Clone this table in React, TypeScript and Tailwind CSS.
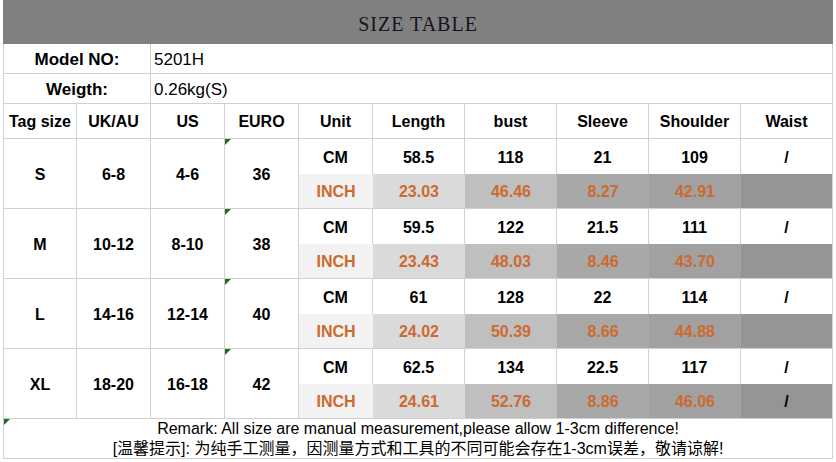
import type { ReactNode } from 'react';

type SizeRow = {
  tag: string;
  uk: string;
  us: string;
  eu: string;
  cm: string[];
  inch: string[];
};

const sizes: SizeRow[] = [
  { tag: 'S', uk: '6-8', us: '4-6', eu: '36', cm: ['58.5', '118', '21', '109', '/'], inch: ['23.03', '46.46', '8.27', '42.91', ''] },
  { tag: 'M', uk: '10-12', us: '8-10', eu: '38', cm: ['59.5', '122', '21.5', '111', '/'], inch: ['23.43', '48.03', '8.46', '43.70', ''] },
  { tag: 'L', uk: '14-16', us: '12-14', eu: '40', cm: ['61', '128', '22', '114', '/'], inch: ['24.02', '50.39', '8.66', '44.88', ''] },
  { tag: 'XL', uk: '18-20', us: '16-18', eu: '42', cm: ['62.5', '134', '22.5', '117', '/'], inch: ['24.61', '52.76', '8.86', '46.06', '/'] },
];

const headers = ['Tag size', 'UK/AU', 'US', 'EURO', 'Unit', 'Length', 'bust', 'Sleeve', 'Shoulder', 'Waist'];

// shading of the INCH row, Length → Waist
const inchBg = ['bg-[#dadada]', 'bg-[#bfbfbf]', 'bg-[#a8a8a8]', 'bg-[#a1a1a1]', 'bg-[#959595]'];

function Flag() {
  return <span className="absolute top-0 left-0 w-0 h-0 border-t-[6px] border-r-[6px] border-t-[#1f6b25] border-r-transparent" />;
}

function Cell({
  children,
  className = '',
  color = 'text-black',
}: {
  children?: ReactNode;
  className?: string;
  color?: string;
}) {
  return (
    <div className={`flex items-center justify-center pt-[2px] border-r border-b border-[#d0d0d0] text-[16px] font-bold ${color} ${className}`}>
      {children}
    </div>
  );
}

export default function App() {
  return (
    <div className="w-[836px] h-[462px] bg-white pl-[3px] font-['Liberation_Sans',Arial,sans-serif]">
      <div className="w-[830px] grid grid-cols-[74px_74px_74px_74px_74px_92px_92px_92px_92px_92px] grid-rows-[44px_30px_30px_35px_repeat(8,35px)_40px]">
        <div className="col-span-10 bg-[#808080] flex items-center justify-center pt-[4px]">
          <span className="font-['Liberation_Serif',serif] text-[20px] tracking-[1px] text-[#14141c]">SIZE TABLE</span>
        </div>

        <Cell className="col-span-2 border-l text-[17px]">Model NO:</Cell>
        <Cell className="col-span-8 justify-start pl-[3px] font-normal text-[17px]">5201H</Cell>
        <Cell className="col-span-2 border-l text-[17px]">Weigth:</Cell>
        <Cell className="col-span-8 justify-start pl-[3px] font-normal text-[17px]">0.26kg(S)</Cell>

        {headers.map((h, i) => (
          <Cell key={h} className={`${i === 0 ? 'border-l text-[15px]' : ''}`}>
            {h}
          </Cell>
        ))}

        {sizes.map((s) => (
          <div key={s.tag} className="contents">
            <Cell className="row-span-2 border-l">{s.tag}</Cell>
            <Cell className="row-span-2">{s.uk}</Cell>
            <Cell className="row-span-2">{s.us}</Cell>
            <Cell className="row-span-2 relative">
              <Flag />
              {s.eu}
            </Cell>
            <Cell className="border-b-0">CM</Cell>
            {s.cm.map((v, i) => (
              <Cell key={`cm${i}`} className="border-b-0">
                {v}
              </Cell>
            ))}
            <Cell className="bg-[#f2f2f2] border-r-0" color="text-[#cc6a30]">
              INCH
            </Cell>
            {s.inch.map((v, i) => (
              <Cell
                key={`in${i}`}
                className={`${inchBg[i]} ${i === 4 ? '' : 'border-r-0'}`}
                color={i === 4 ? 'text-black' : 'text-[#cc6a30]'}
              >
                {v}
              </Cell>
            ))}
          </div>
        ))}

        <div className="col-span-10 relative flex flex-col items-center justify-center border-l border-r border-b border-[#d0d0d0] text-black font-['Liberation_Sans','Noto_Sans_CJK_SC',sans-serif] leading-[20px]">
          <Flag />
          <p className="text-[16px]">Remark: All size are manual measurement,please allow 1-3cm difference!</p>
          <p className="text-[16px]">[温馨提示]: 为纯手工测量，因测量方式和工具的不同可能会存在1-3cm误差，敬请谅解!</p>
        </div>
      </div>
    </div>
  );
}
